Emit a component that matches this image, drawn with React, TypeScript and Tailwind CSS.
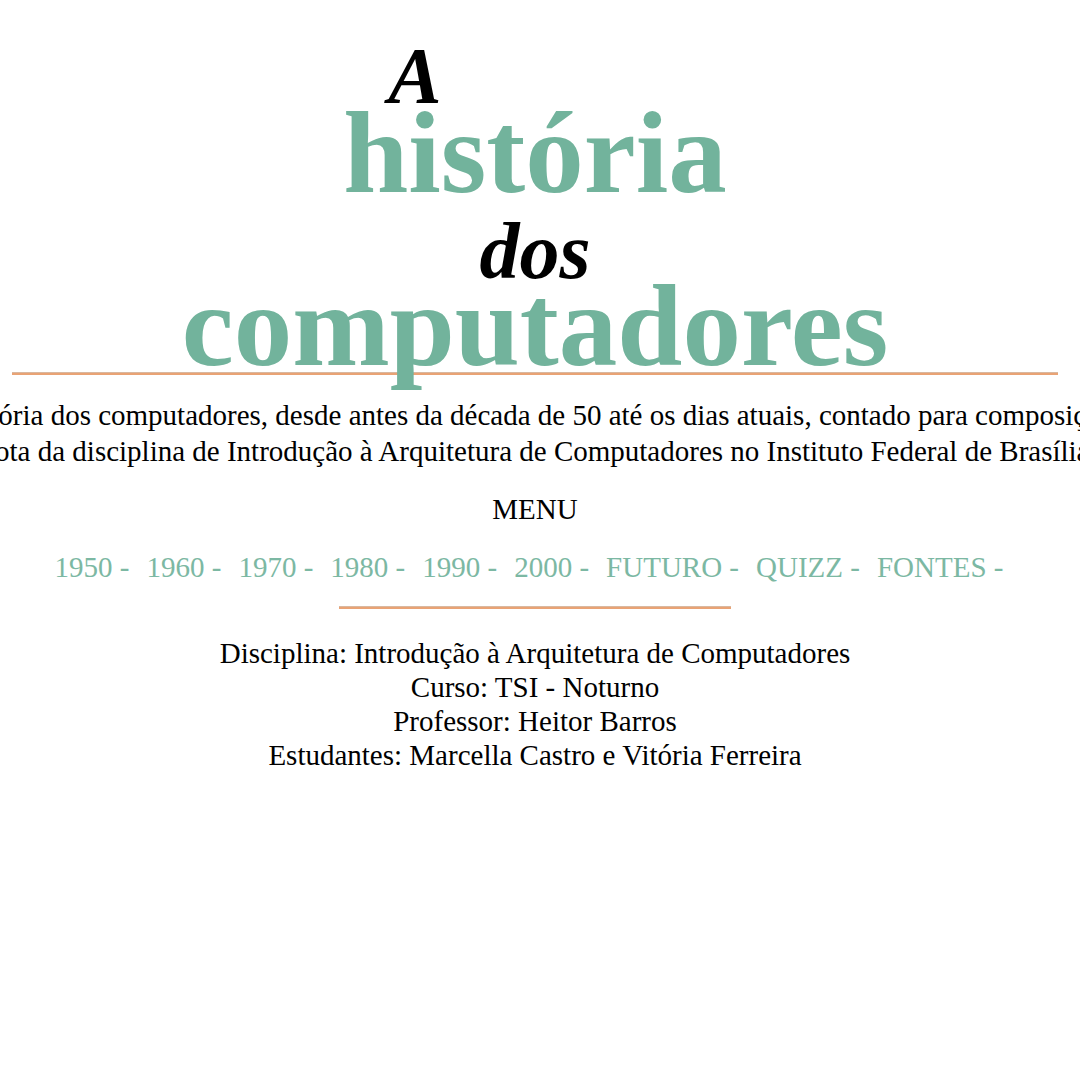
import React from "react";

const links = ["1950", "1960", "1970", "1980", "1990", "2000", "FUTURO", "QUIZZ", "FONTES"];

export default function App() {
  return (
    <div className="w-[1080px] h-[1080px] overflow-hidden bg-white">
      <div
        className="w-[1070px] text-black"
        style={{ fontFamily: '"Liberation Serif", "Times New Roman", serif' }}
      >
        <div className="flex flex-col items-center pt-[41px]">
          <div className="text-[80px] leading-[70px] font-bold italic mr-[240px]">A</div>
          <div className="text-[117px] leading-[83px] font-bold text-[#72b39c]">história</div>
          <div className="text-[80px] leading-[114px] font-bold italic">dos</div>
          <div className="text-[117px] leading-[35px] font-bold text-[#72b39c]">computadores</div>
        </div>
        <div className="mt-[29px] ml-[12px] w-[1046px] h-[3px] bg-[#e9a375] border-t border-[#d9b8a0]" />
        <div className="flex flex-col items-center text-[29px] leading-[36px] mt-[22px]">
          <div className="whitespace-nowrap">
            história dos computadores, desde antes da década de 50 até os dias atuais, contado para composição
          </div>
          <div className="whitespace-nowrap">
            nota da disciplina de Introdução à Arquitetura de Computadores no Instituto Federal de Brasília
          </div>
        </div>
        <div className="flex flex-col items-center mt-[23px]">
          <div className="text-[29px] leading-[34px]">MENU</div>
          <nav className="flex gap-[17px] mt-[24px] mr-[12px] text-[29px] leading-[34px] text-[#7cb8a3]">
            {links.map((l) => (
              <a key={l} href="#" className="whitespace-nowrap">
                {l} -
              </a>
            ))}
          </nav>
          <div className="mt-[22px] w-[392px] h-[3px] bg-[#e9a375] border-t border-[#d9b8a0]" />
          <div className="mt-[27px] flex flex-col items-center text-[29px] leading-[34px]">
            <div>Disciplina: Introdução à Arquitetura de Computadores</div>
            <div>Curso: TSI - Noturno</div>
            <div>Professor: Heitor Barros</div>
            <div>Estudantes: Marcella Castro e Vitória Ferreira</div>
          </div>
        </div>
      </div>
    </div>
  );
}
